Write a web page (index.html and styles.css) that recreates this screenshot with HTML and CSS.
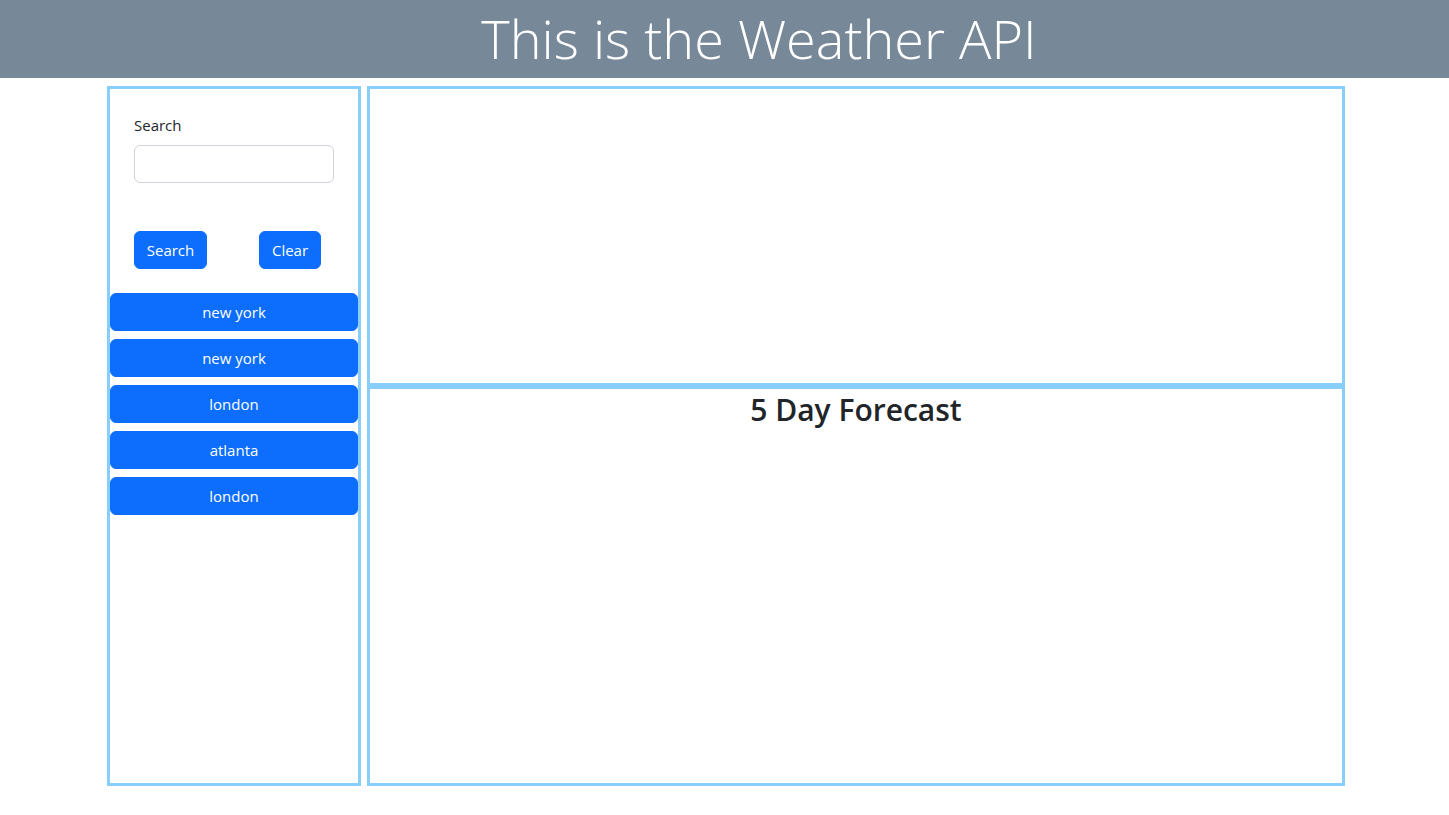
FILE: index.html
```html
<!DOCTYPE html>
<html lang="en">
<head>
<meta charset="utf-8">
<title>Weather API</title>
<link rel="stylesheet" href="styles.css">
</head>
<body>
<header class="site-header">
  <h1 class="title">This is the Weather API</h1>
</header>
<main class="layout">
  <aside class="sidebar">
    <form class="search-form">
      <label class="form-label" for="city">Search</label>
      <input class="form-input" id="city" type="text">
      <div class="form-actions">
        <button type="button" class="btn btn-search">Search</button>
        <button type="button" class="btn btn-clear">Clear</button>
      </div>
    </form>
    <div class="history">
      <button type="button" class="btn btn-city">new york</button>
      <button type="button" class="btn btn-city">new york</button>
      <button type="button" class="btn btn-city">london</button>
      <button type="button" class="btn btn-city">atlanta</button>
      <button type="button" class="btn btn-city">london</button>
    </div>
  </aside>
  <section class="content">
    <div class="current"></div>
    <div class="forecast">
      <h2 class="forecast-title">5 Day Forecast</h2>
    </div>
  </section>
</main>
</body>
</html>
```
FILE: styles.css
```css
* { box-sizing: border-box; }
body {
  margin: 0;
  font-family: "Open Sans", "Noto Sans", sans-serif;
  font-size: 16px;
  line-height: 1.5;
  color: #212529;
  background: #fff;
}
.site-header {
  height: 78px;
  background: #778899;
  display: flex;
  justify-content: center;
  padding-left: 69px;
}
.title {
  margin: 0;
  padding-top: 1px;
  font-size: 54px;
  font-weight: 300;
  line-height: 74px;
  color: #fff;
}
.layout {
  display: flex;
  gap: 6px;
  margin: 8px 0 0 107px;
}
.sidebar {
  width: 254px;
  height: 700px;
  border: 3px solid #87cefa;
}
.search-form {
  padding: 25px 24px 0 24px;
}
.form-label {
  display: block;
  margin-bottom: 8px;
  font-size: 15px;
}
.form-input {
  display: block;
  width: 200px;
  height: 38px;
  border: 1px solid #ced4da;
  border-radius: 6px;
  font: inherit;
  padding: 6px 12px;
}
.form-actions {
  display: flex;
  gap: 52px;
  margin-top: 48px;
}
.btn {
  height: 38px;
  border: 1px solid #0d6efd;
  background: #0d6efd;
  color: #fff;
  border-radius: 6px;
  font-family: inherit;
  font-size: 15px;
  line-height: 24px;
  padding: 6px 12px;
}
.btn-search { width: 73px; padding: 6px 0; }
.btn-clear { width: 62px; padding: 6px 0; }
.history {
  margin-top: 24px;
  display: flex;
  flex-direction: column;
  gap: 8px;
}
.btn-city {
  width: 100%;
  height: 38px;
}
.content {
  width: 978px;
  display: flex;
  flex-direction: column;
}
.current {
  height: 300px;
  border: 3px solid #87cefa;
}
.forecast {
  height: 400px;
  border: 3px solid #87cefa;
  text-align: center;
}
.forecast-title {
  margin: 0;
  font-size: 30px;
  font-weight: 600;
  line-height: 1.2;
  padding-top: 3px;
}
```
